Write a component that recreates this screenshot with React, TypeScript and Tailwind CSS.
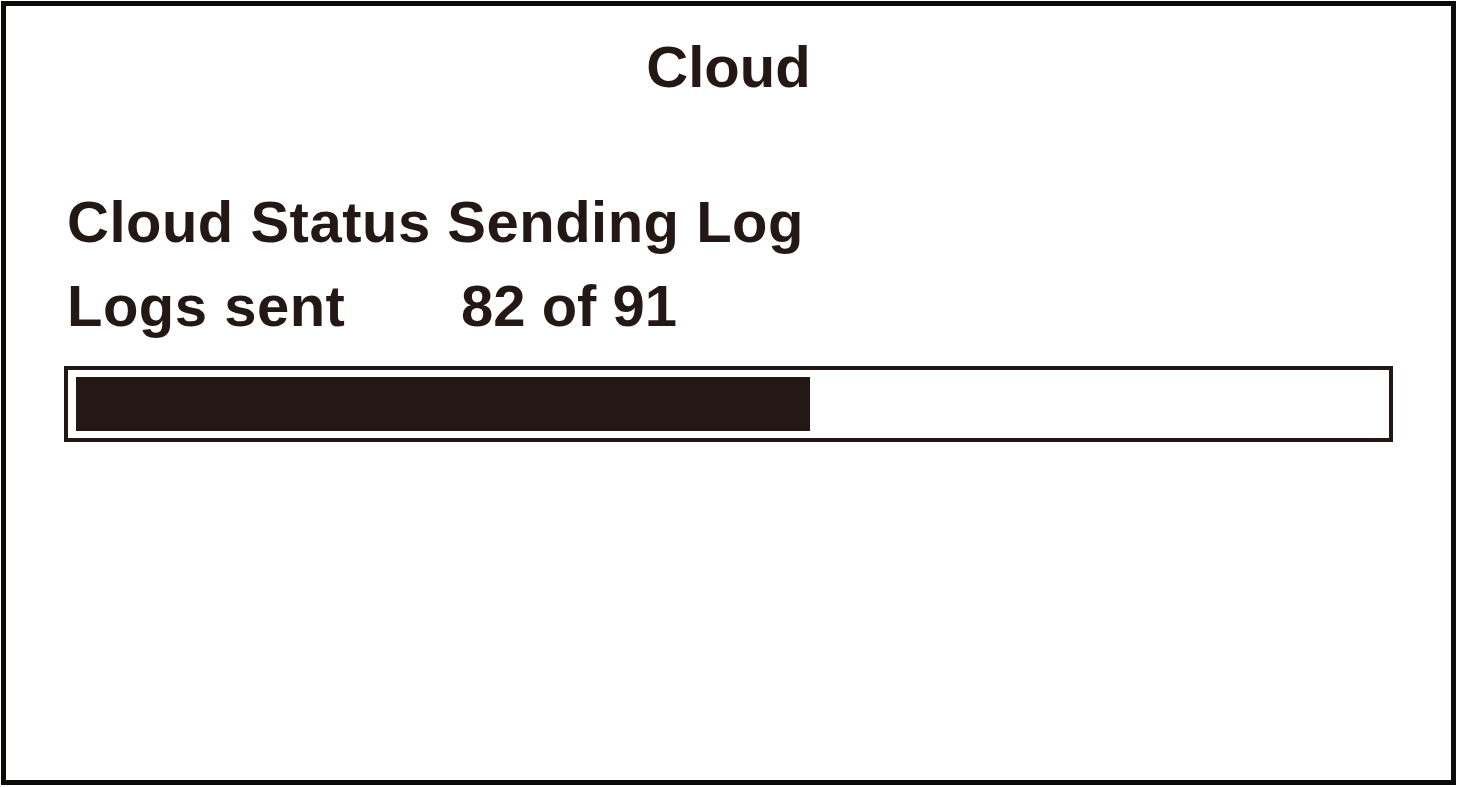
import React from 'react';

interface LogProgress {
  status: string;
  sent: number;
  total: number;
}

const progress: LogProgress = { status: 'Sending Log', sent: 82, total: 91 };

export default function App() {
  return (
    <div className="bg-white w-[1457px] h-[787px] pt-[1px] pl-[1px]">
      <div
        className="w-[1455px] h-[784px] border-[5px] border-[#0d0b0a] px-[58px] pt-[28px] text-[#231815] font-bold text-[58px] leading-[66px]"
        style={{ fontFamily: '"Liberation Sans", Arial, sans-serif' }}
      >
        <h1 className="text-center">Cloud</h1>

        <div className="mt-[89px] pl-[3px] flex flex-col gap-[18px]">
          <p className="tracking-[0.5px]">Cloud Status {progress.status}</p>
          <div className="flex">
            <span className="w-[394px] tracking-[0.5px]">Logs sent</span>
            <span>
              {progress.sent} of {progress.total}
            </span>
          </div>
        </div>

        {/* progress bar */}
        <div className="mt-[27px] h-[76px] border-[4px] border-[#231815] py-[7px] pl-[8px]">
          <div className="h-full w-[734px] bg-[#231815]" />
        </div>
      </div>
    </div>
  );
}
